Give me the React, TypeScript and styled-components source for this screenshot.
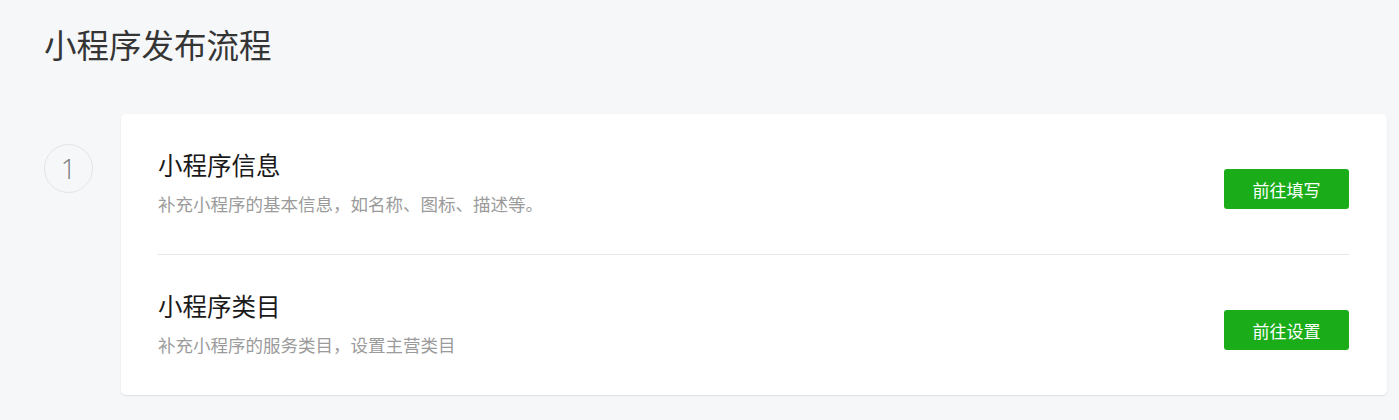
import React from "react";
import styled, { createGlobalStyle } from "styled-components";

const GlobalStyle = createGlobalStyle`
  html, body {
    margin: 0;
    padding: 0;
    background: #f6f7f9;
    font-family: "Noto Sans CJK SC", "Noto Sans", "Liberation Sans", sans-serif;
  }
`;

const Page = styled.div`
  padding: 21px 12px 25px 44px;
  background: #f6f7f9;
  min-height: 420px;
  box-sizing: border-box;
`;

const PageTitle = styled.h1`
  margin: 0 0 48px;
  font-size: 32.5px;
  line-height: 45px;
  font-weight: 400;
  color: #353535;
`;

const StepRow = styled.div`
  display: flex;
  align-items: flex-start;
  gap: 28px;
`;

const StepCircle = styled.div`
  flex: none;
  width: 49px;
  height: 49px;
  margin-top: 30px;
  border: 1.5px solid #e3e4e6;
  border-radius: 50%;
  box-sizing: border-box;
  display: flex;
  align-items: center;
  justify-content: center;
  font-family: "Open Sans", "Liberation Sans", sans-serif;
  font-size: 27px;
  font-weight: 300;
  color: #7a7a7a;
`;

const Card = styled.div`
  flex: 1;
  background: #fff;
  border-radius: 5px;
  box-shadow: 0 1px 2px rgba(0, 0, 0, 0.1);
  padding: 0 38px 0 37px;
`;

const Section = styled.div`
  display: flex;
  align-items: center;
  justify-content: space-between;
  height: 140px;
  box-sizing: border-box;
  padding: 35px 0 25px;
  & + & {
    border-top: 1px solid #e7e7e7;
    height: 141px;
  }
`;

const TextBlock = styled.div`
  align-self: flex-start;
  margin-top: 1px;
`;

const SectionTitle = styled.div`
  font-size: 24.5px;
  line-height: 30px;
  color: #1a1a1a;
  margin-bottom: 14px;
`;

const SectionDesc = styled.div`
  font-size: 17.5px;
  line-height: 20px;
  color: #9b9b9b;
`;

const GreenButton = styled.button`
  width: 125px;
  height: 40px;
  border: none;
  border-radius: 3px;
  background: #1aad19;
  color: #fff;
  font-family: inherit;
  font-size: 17px;
  cursor: pointer;
  padding: 0;
`;

const steps = [
  {
    title: "小程序信息",
    desc: "补充小程序的基本信息，如名称、图标、描述等。",
    action: "前往填写",
  },
  {
    title: "小程序类目",
    desc: "补充小程序的服务类目，设置主营类目",
    action: "前往设置",
  },
];

export default function App() {
  return (
    <>
      <GlobalStyle />
      <Page>
        <PageTitle>小程序发布流程</PageTitle>
        <StepRow>
          <StepCircle>1</StepCircle>
          <Card>
            {steps.map((s) => (
              <Section key={s.title}>
                <TextBlock>
                  <SectionTitle>{s.title}</SectionTitle>
                  <SectionDesc>{s.desc}</SectionDesc>
                </TextBlock>
                <GreenButton>{s.action}</GreenButton>
              </Section>
            ))}
          </Card>
        </StepRow>
      </Page>
    </>
  );
}
